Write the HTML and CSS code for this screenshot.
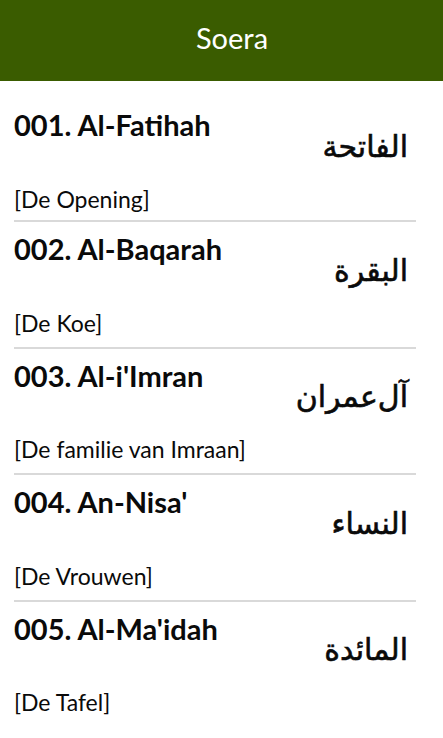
FILE: index.html
```html
<!DOCTYPE html>
<html>
<head>
<meta charset="utf-8">
<link rel="stylesheet" href="styles.css">
</head>
<body>
<header class="bar"><h1 class="bar-title">Soera</h1></header>
<ul class="list">
  <li class="item">
    <div class="name">001. Al-Fatihah</div>
    <div class="arabic" lang="ar" dir="rtl">الفاتحة</div>
    <div class="meaning">[De Opening]</div>
  </li>
  <li class="item">
    <div class="name">002. Al-Baqarah</div>
    <div class="arabic" lang="ar" dir="rtl">البقرة</div>
    <div class="meaning">[De Koe]</div>
  </li>
  <li class="item">
    <div class="name">003. Al-i'Imran</div>
    <div class="arabic" lang="ar" dir="rtl">آل‌عمران</div>
    <div class="meaning">[De familie van Imraan]</div>
  </li>
  <li class="item">
    <div class="name">004. An-Nisa'</div>
    <div class="arabic" lang="ar" dir="rtl">النساء</div>
    <div class="meaning">[De Vrouwen]</div>
  </li>
  <li class="item">
    <div class="name">005. Al-Ma'idah</div>
    <div class="arabic" lang="ar" dir="rtl">المائدة</div>
    <div class="meaning">[De Tafel]</div>
  </li>
</ul>
</body>
</html>
```
FILE: styles.css
```css
html, body {
  margin: 0;
  padding: 0;
  background: #ffffff;
  font-family: "Lato", "Open Sans", sans-serif;
  color: #0a0a0a;
  overflow: hidden;
}
.bar {
  height: 81px;
  background: #3a5c00;
  display: flex;
  align-items: center;
  justify-content: center;
}
.bar-title {
  margin: 0 0 7px 0;
  font-weight: 400;
  font-size: 29px;
  color: #ffffff;
  padding-left: 21px;
  line-height: 1;
}
.list {
  list-style: none;
  margin: 0;
  padding: 0 27px 0 14px;
}
.item {
  height: 126.5px;
  border-bottom: 2px solid #d9d9d9;
  display: flex;
  flex-direction: column;
  padding-top: 12.4px;
  box-sizing: border-box;
}
.item:first-child {
  height: 141px;
  padding-top: 29.4px;
}
.item:last-child { border-bottom: none; }
.name {
  font-size: 29px;
  font-weight: 700;
  line-height: 30px;
}
.arabic {
  font-family: "DejaVu Sans", sans-serif;
  font-weight: 400;
  font-size: 30px;
  line-height: 36px;
  margin-top: -11.5px;
  padding-right: 8px;
  text-align: right;
  -webkit-text-stroke: 0.6px #0a0a0a;
}
.meaning {
  font-size: 23px;
  line-height: 28px;
  margin-top: 20px;
}
```
